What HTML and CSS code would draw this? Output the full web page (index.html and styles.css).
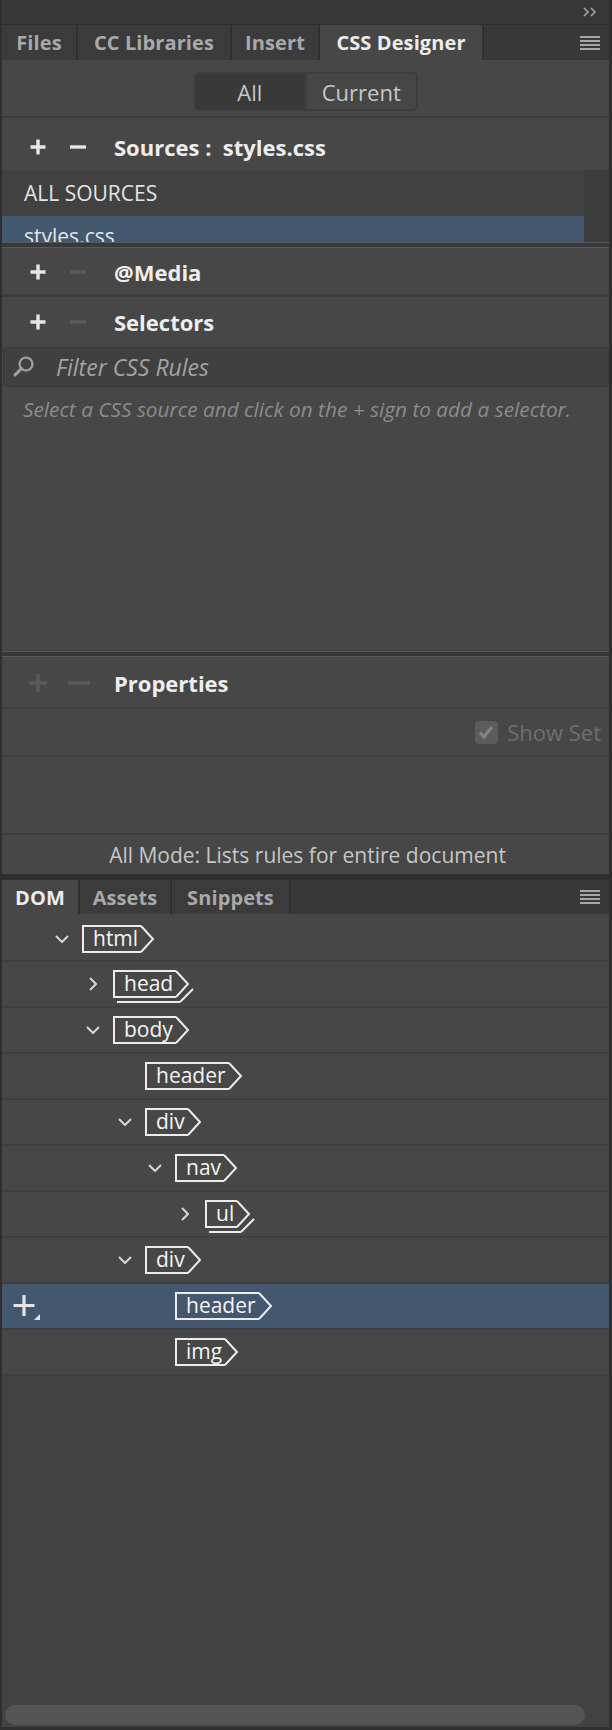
FILE: index.html
```html
<!DOCTYPE html>
<html>
<head>
<meta charset="utf-8">
<title>CSS Designer</title>
<link rel="stylesheet" href="styles.css">
</head>
<body>
<div class="app">
  <div class="topbar">
    <svg class="collapse" width="14" height="10" viewBox="0 0 14 10"><polyline points="1,1 5,5 1,9"/><polyline points="8,1 12,5 8,9"/></svg>
  </div>

  <section class="panel css-panel">
    <div class="tabbar">
      <div class="tab w-files">Files</div>
      <div class="tab w-cc">CC Libraries</div>
      <div class="tab w-insert">Insert</div>
      <div class="tab active w-css">CSS Designer</div>
      <div class="tabfill">
        <svg class="menu" width="20" height="14" viewBox="0 0 20 14"><rect y="0" width="20" height="2"/><rect y="4" width="20" height="2"/><rect y="8" width="20" height="2"/><rect y="12" width="20" height="2"/></svg>
      </div>
    </div>

    <div class="mode-row">
      <div class="seg">
        <div class="seg-btn on">All</div>
        <div class="seg-btn">Current</div>
      </div>
    </div>
    <div class="hline"></div>

    <div class="sec-head h-sources">
      <svg class="pm" width="18" height="18" viewBox="0 0 18 18"><path d="M9 1.5v15M1.5 9h15"/></svg>
      <svg class="pm minus" width="18" height="18" viewBox="0 0 18 18"><path d="M1 9h16"/></svg>
      <span class="title">Sources :&nbsp; styles.css</span>
    </div>

    <div class="source-list">
      <div class="list">
        <div class="item">ALL SOURCES</div>
        <div class="item sel">styles.css</div>
      </div>
      <div class="vtrack"></div>
    </div>
    <div class="splitter"></div>

    <div class="sec-head h-media">
      <svg class="pm" width="18" height="18" viewBox="0 0 18 18"><path d="M9 1.5v15M1.5 9h15"/></svg>
      <svg class="pm minus off" width="18" height="18" viewBox="0 0 18 18"><path d="M1 9h16"/></svg>
      <span class="title">@Media</span>
    </div>
    <div class="hline thick"></div>
    <div class="sec-head h-sel">
      <svg class="pm" width="18" height="18" viewBox="0 0 18 18"><path d="M9 1.5v15M1.5 9h15"/></svg>
      <svg class="pm minus off" width="18" height="18" viewBox="0 0 18 18"><path d="M1 9h16"/></svg>
      <span class="title">Selectors</span>
    </div>
    <div class="filter">
      <svg class="search" width="24" height="24" viewBox="0 0 24 24"><circle cx="14" cy="9" r="6.5"/><path d="M9.5 13.5L3 20"/></svg>
      <span class="filter-text">Filter CSS Rules</span>
    </div>
    <div class="hint-area">
      <p class="hint">Select a CSS source and click on the + sign to add a selector.</p>
    </div>
    <div class="splitter"></div>

    <div class="sec-head h-props">
      <svg class="pm off" width="22" height="22" viewBox="0 0 22 22"><path d="M11 2v18M2 11h18"/></svg>
      <svg class="pm minus off" width="22" height="22" viewBox="0 0 22 22"><path d="M0 11h22"/></svg>
      <span class="title">Properties</span>
    </div>
    <div class="hline"></div>
    <div class="showset-row">
      <span class="check"><svg width="22" height="22" viewBox="0 0 22 22"><path d="M5 11.5l4 4.5 8-10"/></svg></span>
      <span class="showset">Show Set</span>
    </div>
    <div class="hline"></div>
    <div class="props-empty"></div>
    <div class="hline"></div>
    <div class="footer">All Mode: Lists rules for entire document</div>
  </section>

  <section class="panel dom-panel">
    <div class="tabbar dom-tabs">
      <div class="tab active w-dom">DOM</div>
      <div class="tab w-assets">Assets</div>
      <div class="tab w-snip">Snippets</div>
      <div class="tabfill">
        <svg class="menu" width="20" height="14" viewBox="0 0 20 14"><rect y="0" width="20" height="2"/><rect y="4" width="20" height="2"/><rect y="8" width="20" height="2"/><rect y="12" width="20" height="2"/></svg>
      </div>
    </div>

    <div class="tree">
      <div class="node l0 first">
        <span class="twisty"><svg class="chev-down" width="14" height="8" viewBox="0 0 14 8"><polyline points="1,1 7,7 13,1"/></svg></span>
        <span class="tag"><span class="tag-label">html</span><svg class="tag-tip" width="13" height="28" viewBox="0 0 13 28"><polyline points="0,1 12,14 0,27"/></svg></span>
      </div>
      <div class="node l1">
        <span class="twisty"><svg class="chev-right" width="8" height="14" viewBox="0 0 8 14"><polyline points="1,1 7,7 1,13"/></svg></span>
        <span class="tag stack"><span class="tag-label">head</span><svg class="tag-tip" width="13" height="28" viewBox="0 0 13 28"><polyline points="0,1 12,14 0,27"/><polyline points="4,32 17,19"/></svg></span>
      </div>
      <div class="node l1">
        <span class="twisty"><svg class="chev-down" width="14" height="8" viewBox="0 0 14 8"><polyline points="1,1 7,7 13,1"/></svg></span>
        <span class="tag"><span class="tag-label">body</span><svg class="tag-tip" width="13" height="28" viewBox="0 0 13 28"><polyline points="0,1 12,14 0,27"/></svg></span>
      </div>
      <div class="node l2">
        <span class="twisty"></span>
        <span class="tag"><span class="tag-label">header</span><svg class="tag-tip" width="13" height="28" viewBox="0 0 13 28"><polyline points="0,1 12,14 0,27"/></svg></span>
      </div>
      <div class="node l2">
        <span class="twisty"><svg class="chev-down" width="14" height="8" viewBox="0 0 14 8"><polyline points="1,1 7,7 13,1"/></svg></span>
        <span class="tag"><span class="tag-label">div</span><svg class="tag-tip" width="13" height="28" viewBox="0 0 13 28"><polyline points="0,1 12,14 0,27"/></svg></span>
      </div>
      <div class="node l3">
        <span class="twisty"><svg class="chev-down" width="14" height="8" viewBox="0 0 14 8"><polyline points="1,1 7,7 13,1"/></svg></span>
        <span class="tag"><span class="tag-label">nav</span><svg class="tag-tip" width="13" height="28" viewBox="0 0 13 28"><polyline points="0,1 12,14 0,27"/></svg></span>
      </div>
      <div class="node l4">
        <span class="twisty"><svg class="chev-right" width="8" height="14" viewBox="0 0 8 14"><polyline points="1,1 7,7 1,13"/></svg></span>
        <span class="tag stack"><span class="tag-label">ul</span><svg class="tag-tip" width="13" height="28" viewBox="0 0 13 28"><polyline points="0,1 12,14 0,27"/><polyline points="4,32 17,19"/></svg></span>
      </div>
      <div class="node l2">
        <span class="twisty"><svg class="chev-down" width="14" height="8" viewBox="0 0 14 8"><polyline points="1,1 7,7 13,1"/></svg></span>
        <span class="tag"><span class="tag-label">div</span><svg class="tag-tip" width="13" height="28" viewBox="0 0 13 28"><polyline points="0,1 12,14 0,27"/></svg></span>
      </div>
      <div class="node l3 selected">
        <svg class="add-node" width="28" height="26" viewBox="0 0 28 26"><path d="M11 1v21M0.5 11.5h21" /><polygon points="27,20 27,26 21,26"/></svg>
        <span class="twisty"></span>
        <span class="tag"><span class="tag-label">header</span><svg class="tag-tip" width="13" height="28" viewBox="0 0 13 28"><polyline points="0,1 12,14 0,27"/></svg></span>
      </div>
      <div class="node l3">
        <span class="twisty"></span>
        <span class="tag"><span class="tag-label">img</span><svg class="tag-tip" width="13" height="28" viewBox="0 0 13 28"><polyline points="0,1 12,14 0,27"/></svg></span>
      </div>
    </div>

    <div class="hscroll">
      <div class="hthumb"></div>
    </div>
  </section>
</div>
</body>
</html>
```

FILE: styles.css
```css
* { box-sizing: border-box; }

html, body {
  margin: 0;
  padding: 0;
}

body {
  width: 612px;
  height: 1730px;
  overflow: hidden;
  background: #2f2f2f;
  font-family: "Open Sans", "Liberation Sans", sans-serif;
  color: #d0d0d0;
}

.app {
  width: 612px;
  height: 1730px;
  display: flex;
  flex-direction: column;
  padding: 0 3px 3px 2px;
  background: #2f2f2f;
}

/* top strip */
.topbar {
  height: 24px;
  margin-bottom: 1px;
  background: #383838;
  display: flex;
  justify-content: flex-end;
  align-items: center;
  padding-right: 12px;
}
.collapse polyline {
  fill: none;
  stroke: #a8a8a8;
  stroke-width: 1.5;
}

/* panels */
.panel {
  display: flex;
  flex-direction: column;
  background: #474747;
}
.css-panel { height: 849px; flex-shrink: 0; }
.dom-panel {
  flex: 1;
  margin-top: 6px;
  background: #424242;
}

/* tabs */
.tabbar {
  height: 35px;
  flex-shrink: 0;
  display: flex;
  gap: 2px;
  background: #2f2f2f;
}
.tab {
  display: flex;
  align-items: center;
  justify-content: center;
  background: #3b3b3b;
  color: #a9a9a9;
  font-weight: 700;
  font-size: 20px;
  letter-spacing: 0.1px;
}
.tab.active {
  background: #474747;
  color: #ececec;
}
.w-files { width: 74px; }
.w-cc { width: 152px; }
.w-insert { width: 86px; }
.w-css { width: 162px; }
.w-dom { width: 76px; }
.w-assets { width: 90px; }
.w-snip { width: 117px; }
.tabfill {
  flex: 1;
  background: #383838;
  display: flex;
  justify-content: flex-end;
  align-items: center;
  padding-right: 9px;
}
.menu rect { fill: #a6a6a6; }
.dom-tabs { height: 34px; }

/* All / Current */
.mode-row {
  height: 56px;
  flex-shrink: 0;
  display: flex;
  justify-content: center;
  padding-top: 12px;
}
.seg {
  display: flex;
  height: 39px;
  width: 224px;
  border: 2px solid #3d3d3d;
  border-radius: 5px;
  overflow: hidden;
  background: #3d3d3d;
  gap: 3px;
}
.seg-btn {
  flex: 1;
  display: flex;
  align-items: center;
  justify-content: center;
  font-size: 22px;
  color: #c6c6c6;
  background: #464646;
}
.seg-btn.on {
  background: #393939;
}

.hline {
  height: 2px;
  flex-shrink: 0;
  background: #3d3d3d;
}
.hline.thick { height: 3px; }

/* section headers */
.sec-head {
  display: flex;
  flex-shrink: 0;
  align-items: center;
  padding-left: 27px;
  background: #474747;
}
.h-sources { height: 52px; padding-top: 5px; }
.h-media { height: 46px; padding-top: 2px; }
.h-sel { height: 50px; }
.h-props { height: 50px; padding-left: 25px; padding-top: 2px; }
.pm path {
  fill: none;
  stroke: #e6e6e6;
  stroke-width: 3.4;
}
.pm.off path { stroke: #5b5b5b; }
.pm.minus { margin-left: 22px; }
.h-props .pm.minus { margin-left: 19px; }
.title {
  margin-left: 27px;
  font-weight: 700;
  font-size: 22px;
  color: #eeeeee;
}
.h-props .title { margin-left: 24px; }

/* source list */
.source-list {
  height: 72px;
  flex-shrink: 0;
  display: flex;
  overflow: hidden;
  background: #3c3c3c;
}
.list {
  width: 582px;
  background: #414141;
  overflow: hidden;
}
.item {
  height: 46px;
  display: flex;
  align-items: center;
  padding-left: 22px;
  font-size: 21px;
  color: #e4e4e4;
}
.item.sel {
  background: #44586f;
  align-items: flex-start;
  padding-top: 6px;
}
.vtrack { flex: 1; background: #3c3c3c; }

.splitter {
  height: 6px;
  flex-shrink: 0;
  border-top: 1px solid #5a5a5a;
  border-bottom: 1px solid #5a5a5a;
  box-shadow: inset 0 1px 0 #363636, inset 0 -1px 0 #363636;
  background: #3a3a3a;
}

/* filter */
.filter {
  height: 40px;
  flex-shrink: 0;
  margin: 0 0 0 1px;
  border: 1px solid #3a3a3a;
  border-radius: 4px;
  background: #404040;
  display: flex;
  align-items: center;
  padding-left: 8px;
}
.search circle, .search path {
  fill: none;
  stroke: #a3a3a3;
  stroke-width: 2.2;
}
.search path { stroke-width: 3; stroke-linecap: round; }
.filter-text {
  margin-left: 20px;
  font-style: italic;
  font-size: 23px;
  color: #a3a3a3;
}

.hint-area {
  flex: 1;
  background: #474747;
}
.hint {
  margin: 8px 0 0 21px;
  font-style: italic;
  font-size: 20.8px;
  color: #8c8c8c;
  white-space: nowrap;
}

/* properties */
.showset-row {
  height: 46px;
  flex-shrink: 0;
  display: flex;
  align-items: center;
  justify-content: flex-end;
  padding-right: 8px;
  gap: 9px;
}
.check {
  width: 23px;
  height: 23px;
  border-radius: 4px;
  background: #5c5c5c;
  display: flex;
}
.check path {
  fill: none;
  stroke: #858585;
  stroke-width: 3;
}
.showset {
  font-size: 22px;
  color: #6f6f6f;
}
.props-empty { height: 76px; flex-shrink: 0; }

.footer {
  height: 39px;
  flex-shrink: 0;
  display: flex;
  align-items: center;
  justify-content: center;
  font-size: 21px;
  color: #c6c6c6;
  padding-left: 4px;
}

/* DOM tree */
.tree {
  display: flex;
  flex-direction: column;
}
.node {
  position: relative;
  height: 46px;
  flex-shrink: 0;
  display: flex;
  align-items: center;
  background: #474747;
  border-bottom: 2px solid #3f3f3f;
}
.node.first {
  height: 48px;
  padding-top: 4px;
}
.node.selected {
  background: #43576e;
}
.l0 { padding-left: 50px; }
.l1 { padding-left: 81px; }
.l2 { padding-left: 113px; }
.l3 { padding-left: 143px; }
.l4 { padding-left: 173px; }

.twisty {
  width: 30px;
  height: 28px;
  display: flex;
  align-items: center;
  padding-left: 3px;
}
.chev-down polyline, .chev-right polyline {
  fill: none;
  stroke: #d6d6d6;
  stroke-width: 2;
}
.chev-right { margin-left: 3px; }

.tag {
  position: relative;
  display: inline-flex;
  height: 28px;
}
.tag-label {
  position: relative;
  height: 28px;
  border: 2px solid #ececec;
  border-right: none;
  padding: 0 3px 0 9px;
  font-size: 21px;
  line-height: 23px;
  color: #f4f4f4;
}
.tag-tip { overflow: visible; }
.tag-tip polyline {
  fill: none;
  stroke: #ececec;
  stroke-width: 2;
}
.tag.stack .tag-label::after {
  content: "";
  position: absolute;
  left: 2px;
  right: -4px;
  bottom: -7px;
  height: 2px;
  background: #ececec;
}

.add-node {
  position: absolute;
  left: 11px;
  top: 10px;
}
.add-node path {
  fill: none;
  stroke: #e4e4e4;
  stroke-width: 3.2;
}
.add-node polygon { fill: #e4e4e4; }

/* horizontal scrollbar */
.hscroll {
  margin-top: auto;
  height: 24px;
  flex-shrink: 0;
  padding: 2px 24px 1px 3px;
  background: #424242;
}
.hthumb {
  height: 20px;
  border-radius: 10px;
  background: #555555;
}
```
